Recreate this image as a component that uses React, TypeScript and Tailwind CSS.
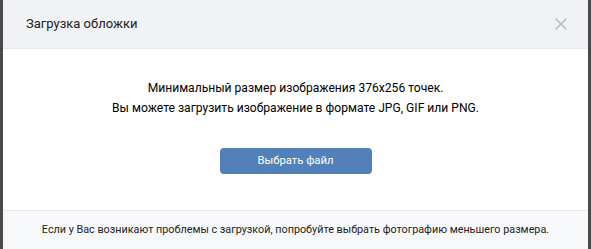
import React from 'react';

export default function App() {
  return (
    <div className="flex h-[249px] w-[591px] bg-[#4a4a4a] px-[3px] font-['Roboto','Open_Sans',sans-serif]">
      <div className="flex flex-1 flex-col overflow-hidden bg-white">
        <div className="flex h-[49px] items-center justify-between border-b border-[#e7e8ec] bg-[#f0f2f5] pl-[23px] pr-[21px]">
          <span className="text-[13px] text-[#222222]">Загрузка обложки</span>
          <svg width="12" height="12" viewBox="0 0 12 12" className="text-[#b2b9c2]">
            <path d="M1 1L11 11M11 1L1 11" stroke="currentColor" strokeWidth="1.5" strokeLinecap="round" />
          </svg>
        </div>

        <div className="flex flex-1 flex-col items-center pt-[29px]">
          <div className="text-center text-[12.1px] leading-[20px] text-[#000000]">
            <p>Минимальный размер изображения 376x256 точек.</p>
            <p>Вы можете загрузить изображение в формате JPG, GIF или PNG.</p>
          </div>
          <button className="mt-[30px] h-[26px] w-[152px] rounded-[4px] bg-[#5181b8] text-[11.3px] text-white">
            Выбрать файл
          </button>
        </div>

        <div className="flex h-[39px] items-center justify-center whitespace-nowrap border-t border-[#e7e8ec] bg-[#f7f8fa] text-[10.8px] text-[#222222]">
          Если у Вас возникают проблемы с загрузкой, попробуйте выбрать фотографию меньшего размера.
        </div>
      </div>
    </div>
  );
}
